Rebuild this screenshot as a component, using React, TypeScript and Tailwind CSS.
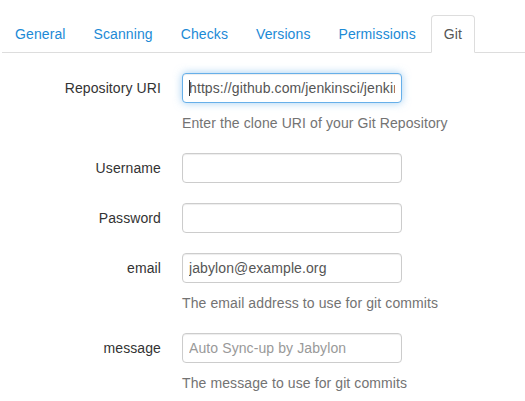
import React from "react";

const tabs = ["General", "Scanning", "Checks", "Versions", "Permissions", "Git"];

function Row({
  label,
  children,
  help,
}: {
  label: string;
  children: React.ReactNode;
  help?: string;
}) {
  return (
    <div className="flex mb-[20px]">
      <div className="w-[161px] shrink-0 text-right text-[#333] h-[30px] flex items-center justify-end">
        {label}
      </div>
      <div className="ml-[21px] w-[220px]">
        {children}
        {help && (
          <div className="mt-[10px] text-[#737373] leading-[20px] whitespace-nowrap">{help}</div>
        )}
      </div>
    </div>
  );
}

const inputCls =
  "block w-[220px] h-[30px] rounded-[4px] border px-[6px] text-[14px] text-[#555] bg-white outline-none placeholder:text-[#999]";

export default function App() {
  return (
    <div
      className="w-[525px] h-[401px] bg-white text-[14px] leading-[20px] tracking-[0.1px] overflow-hidden"
      style={{ fontFamily: '"Liberation Sans", Arial, sans-serif' }}
    >
      <div className="pt-[15px] pl-[2px]">
        <ul className="flex border-b border-[#ddd]">
          {tabs.map((t, i) => {
            const active = t === "Git";
            return (
              <li key={t} className={`-mb-px ${i === 0 ? "ml-0" : "ml-[2px]"}`}>
                <span
                  className={
                    active
                      ? "block px-[12px] py-[8px] border border-[#ddd] border-b-white rounded-t-[4px] bg-white text-[#555]"
                      : "block px-[12px] py-[8px] border border-transparent text-[#1c8ad6]"
                  }
                >
                  {t}
                </span>
              </li>
            );
          })}
        </ul>
      </div>
      <div className="pt-[20px]">
        <Row label="Repository URI" help="Enter the clone URI of your Git Repository">
          <div className="relative">
            <input
              className={`${inputCls} border-[#66afe9] shadow-[inset_0_1px_1px_rgba(0,0,0,0.075),0_0_8px_rgba(102,175,233,0.6)]`}
              defaultValue="https://github.com/jenkinsci/jenkins.git"
              readOnly
            />
            <span className="absolute left-[7px] top-[7px] w-px h-[16px] bg-[#333]" />
          </div>
        </Row>
        <Row label="Username">
          <input className={`${inputCls} border-[#ccc] shadow-[inset_0_1px_1px_rgba(0,0,0,0.075)]`} />
        </Row>
        <Row label="Password">
          <input className={`${inputCls} border-[#ccc] shadow-[inset_0_1px_1px_rgba(0,0,0,0.075)]`} type="password" />
        </Row>
        <Row label="email" help="The email address to use for git commits">
          <input
            className={`${inputCls} border-[#ccc] shadow-[inset_0_1px_1px_rgba(0,0,0,0.075)]`}
            defaultValue="jabylon@example.org"
          />
        </Row>
        <Row label="message" help="The message to use for git commits">
          <input
            className={`${inputCls} border-[#ccc] shadow-[inset_0_1px_1px_rgba(0,0,0,0.075)]`}
            placeholder="Auto Sync-up by Jabylon"
          />
        </Row>
      </div>
    </div>
  );
}
